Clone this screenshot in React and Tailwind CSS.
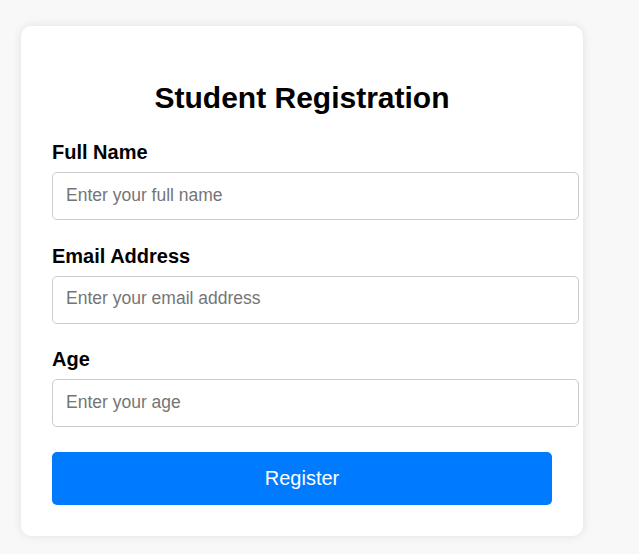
const FIELDS = [
  { id: "fullName", label: "Full Name", type: "text", placeholder: "Enter your full name" },
  { id: "email", label: "Email Address", type: "email", placeholder: "Enter your email address" },
  { id: "age", label: "Age", type: "number", placeholder: "Enter your age" },
];

export default function App() {
  return (
    <div className="min-h-[554px] bg-[#f8f8f8] pt-[26px] pl-[21px] font-['Liberation_Sans',Arial,sans-serif]">
      <form
        onSubmit={(e) => e.preventDefault()}
        className="w-[562px] rounded-[10px] bg-white px-[31px] pt-[55px] pb-[31px] shadow-[0_0_10px_rgba(0,0,0,0.1)]"
      >
        <h2 className="mb-[26px] text-center text-[30px] leading-[34px] font-bold text-black">
          Student Registration
        </h2>

        {FIELDS.map((field) => (
          <div key={field.id} className="mb-[24.5px]">
            <label
              htmlFor={field.id}
              className="mb-[8px] block text-[20px] leading-[23px] font-bold text-black"
            >
              {field.label}
            </label>
            <input
              id={field.id}
              type={field.type}
              placeholder={field.placeholder}
              className="block h-[48px] w-[527px] rounded-[5px] border border-[#cccccc] px-[13px] pb-[2px] text-[17.5px] text-black outline-none placeholder:text-[#757575] [appearance:textfield]"
            />
          </div>
        ))}

        <button
          type="submit"
          className="mt-[1px] block h-[53px] w-[500px] cursor-pointer rounded-[5px] bg-[#007bff] text-[20px] text-white hover:bg-[#0069d9]"
        >
          Register
        </button>
      </form>
    </div>
  );
}
